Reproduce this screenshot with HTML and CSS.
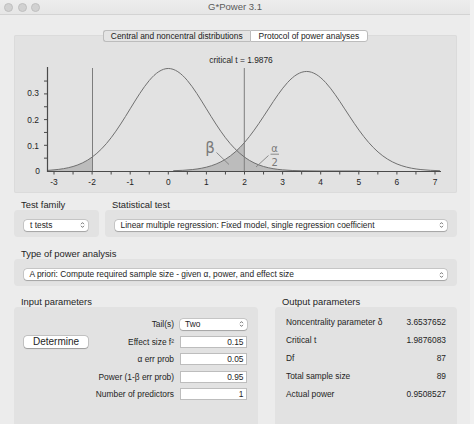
FILE: index.html
```html
<!DOCTYPE html>
<html>
<head>
<meta charset="utf-8">
<title>G*Power 3.1</title>
<link rel="stylesheet" href="styles.css">
</head>
<body>
<div class="window">
  <div class="titlebar">
    <div class="lights"><span class="light"></span><span class="light"></span><span class="light"></span></div>
    <div class="title">G*Power 3.1</div>
    <div></div>
  </div>
  <div class="main">
    <div class="tabs">
      <div class="tab">Central and noncentral distributions</div>
      <div class="tab active">Protocol of power analyses</div>
    </div>
    <div class="graph">
      <svg class="plot" width="443" height="158" viewBox="14 35 443 158" xmlns="http://www.w3.org/2000/svg">
        <!-- shaded areas -->
        <path class="fill" d="M48,171 L48,170.35 L54,169.86 C60.35,169.29 66.70,168.37 73.05,166.50 C79.40,164.63 85.75,161.75 92.1,157.12 L92.5,156.9 L92.5,171 Z"/>
        <path class="fill" d="M244.3,171 L244.3,157.2 L244.5,157.12 C250.85,161.75 257.20,164.63 263.55,166.50 C269.90,168.37 276.25,169.29 282.6,169.86 C288.95,170.43 295.30,170.65 301.65,170.78 C308.00,170.91 314.35,170.95 320.7,170.97 L360,171 Z"/>
        <path class="fill" d="M173.25,171 L173.25,170.69 C179.60,170.52 185.95,170.24 192.30,169.57 C198.65,168.90 205.00,167.82 211.35,165.76 C217.70,163.70 224.05,160.64 230.40,155.89 C234.93,152.50 239.47,148.23 244.3,143.09 L244.3,171 Z"/>
        <!-- critical lines -->
        <path class="crit" d="M92.5,68 L92.5,171 M244.3,68 L244.3,171"/>
        <!-- central curve -->
        <path class="curve" d="M48,170.35 L54,169.86 C60.35,169.29 66.70,168.37 73.05,166.50 C79.40,164.63 85.75,161.75 92.1,157.12 C98.45,152.49 104.80,146.04 111.15,137.72 C117.50,129.40 123.85,119.18 130.2,108.81 C136.55,98.45 142.90,88.05 149.25,80.51 C155.60,72.97 161.95,68.48 168.3,68.48 C174.65,68.48 181.00,72.97 187.35,80.51 C193.70,88.05 200.05,98.45 206.4,108.81 C212.75,119.18 219.10,129.40 225.45,137.72 C231.80,146.04 238.15,152.49 244.5,157.12 C250.85,161.75 257.20,164.63 263.55,166.50 C269.90,168.37 276.25,169.29 282.6,169.86 C288.95,170.43 295.30,170.65 301.65,170.78 C308.00,170.91 314.35,170.95 320.7,170.97 L360,171"/>
        <!-- noncentral curve -->
        <path class="curve" d="M173.25,170.69 C179.60,170.52 185.95,170.24 192.30,169.57 C198.65,168.90 205.00,167.82 211.35,165.76 C217.70,163.70 224.05,160.64 230.40,155.89 C236.75,151.14 243.10,144.64 249.45,136.51 C255.80,128.38 262.15,118.64 268.50,108.88 C274.85,99.12 281.20,89.47 287.55,82.52 C293.90,75.57 300.25,71.46 306.60,71.46 C312.95,71.46 319.30,75.57 325.65,82.52 C332.00,89.47 338.35,99.12 344.70,108.88 C351.05,118.64 357.40,128.38 363.75,136.51 C370.10,144.64 376.45,151.14 382.80,155.89 C389.15,160.64 395.50,163.70 401.85,165.76 C408.20,167.82 414.55,168.90 420.90,169.57 C427.25,170.24 433.60,170.52 439.95,170.69"/>
        <!-- axes -->
        <path class="axis" d="M47.5,67 L47.5,171.5 L441,171.5"/>
        <path class="tick" d="M44,81.05 H47.5 M44,93.9 H47.5 M44,106.75 H47.5 M44,119.6 H47.5 M44,132.45 H47.5 M44,145.3 H47.5 M44,158.15 H47.5
          M54,171.5 V174.5 M73.05,171.5 V174.5 M92.1,171.5 V174.5 M111.15,171.5 V174.5 M130.2,171.5 V174.5 M149.25,171.5 V174.5 M168.3,171.5 V174.5 M187.35,171.5 V174.5 M206.4,171.5 V174.5 M225.45,171.5 V174.5 M244.5,171.5 V174.5 M263.55,171.5 V174.5 M282.6,171.5 V174.5 M301.65,171.5 V174.5 M320.7,171.5 V174.5 M339.75,171.5 V174.5 M358.8,171.5 V174.5 M377.85,171.5 V174.5 M396.9,171.5 V174.5 M415.95,171.5 V174.5 M435,171.5 V174.5"/>
        <g class="lbl">
          <text x="39" y="96" text-anchor="end">0.3</text>
          <text x="39" y="123" text-anchor="end">0.2</text>
          <text x="39" y="149" text-anchor="end">0.1</text>
          <text x="40" y="174" text-anchor="end">0</text>
          <text x="54" y="185" text-anchor="middle">-3</text>
          <text x="92.1" y="185" text-anchor="middle">-2</text>
          <text x="130.2" y="185" text-anchor="middle">-1</text>
          <text x="168.3" y="185" text-anchor="middle">0</text>
          <text x="206.4" y="185" text-anchor="middle">1</text>
          <text x="244.5" y="185" text-anchor="middle">2</text>
          <text x="282.6" y="185" text-anchor="middle">3</text>
          <text x="320.7" y="185" text-anchor="middle">4</text>
          <text x="358.8" y="185" text-anchor="middle">5</text>
          <text x="396.9" y="185" text-anchor="middle">6</text>
          <text x="435" y="185" text-anchor="middle">7</text>
          <text x="241" y="63" text-anchor="middle">critical t = 1.9876</text>
        </g>
        <text class="greek beta" x="210" y="153" text-anchor="middle">β</text>
        <path class="pointer" d="M216.5,152.5 L229,164.5 M256,167 L268.5,155.5"/>
        <text class="greek alpha" x="274.5" y="151.5" text-anchor="middle">α</text>
        <path class="pointer" d="M270.5,154.2 H279"/>
        <text class="greek alpha" x="274.8" y="166" text-anchor="middle">2</text>
      </svg>
    </div>

    <div class="row row-first">
      <div class="group family">
        <div class="group-label">Test family</div>
        <div class="group-box">
          <div class="select"><span>t tests</span><svg class="chev" width="5" height="8" viewBox="0 0 5 8"><path d="M1,3.2 L2.5,1.6 L4,3.2 M1,4.8 L2.5,6.4 L4,4.8"/></svg></div>
        </div>
      </div>
      <div class="group stat">
        <div class="group-label">Statistical test</div>
        <div class="group-box">
          <div class="select"><span>Linear multiple regression: Fixed model, single regression coefficient</span><svg class="chev" width="5" height="8" viewBox="0 0 5 8"><path d="M1,3.2 L2.5,1.6 L4,3.2 M1,4.8 L2.5,6.4 L4,4.8"/></svg></div>
        </div>
      </div>
    </div>

    <div class="row row-second">
      <div class="group wide">
        <div class="group-label">Type of power analysis</div>
        <div class="group-box">
          <div class="select"><span>A priori: Compute required sample size - given α, power, and effect size</span><svg class="chev" width="5" height="8" viewBox="0 0 5 8"><path d="M1,3.2 L2.5,1.6 L4,3.2 M1,4.8 L2.5,6.4 L4,4.8"/></svg></div>
        </div>
      </div>
    </div>

    <div class="row row-third">
      <div class="group input">
        <div class="group-label">Input parameters</div>
        <div class="param-box input-grid">
          <div class="plabel r1">Tail(s)</div>
          <div class="select tail r1"><span>Two</span><svg class="chev" width="5" height="8" viewBox="0 0 5 8"><path d="M1,3.2 L2.5,1.6 L4,3.2 M1,4.8 L2.5,6.4 L4,4.8"/></svg></div>
          <div class="button r2">Determine</div>
          <div class="plabel r2">Effect size f²</div>
          <div class="field r2">0.15</div>
          <div class="plabel r3">α err prob</div>
          <div class="field r3">0.05</div>
          <div class="plabel r4">Power (1-β err prob)</div>
          <div class="field r4">0.95</div>
          <div class="plabel r5">Number of predictors</div>
          <div class="field r5">1</div>
        </div>
      </div>
      <div class="group output">
        <div class="group-label">Output parameters</div>
        <div class="param-box output-list">
          <div class="orow"><span>Noncentrality parameter δ</span><span>3.6537652</span></div>
          <div class="orow"><span>Critical t</span><span>1.9876083</span></div>
          <div class="orow"><span>Df</span><span>87</span></div>
          <div class="orow"><span>Total sample size</span><span>89</span></div>
          <div class="orow"><span>Actual power</span><span>0.9508527</span></div>
        </div>
      </div>
    </div>
  </div>
</div>
</body>
</html>
```

FILE: styles.css
```css
html, body {
  margin: 0;
  padding: 0;
}
body {
  width: 474px;
  height: 424px;
  overflow: hidden;
  background: #f1f1f1;
  font-family: "Liberation Sans", Arial, sans-serif;
  color: #1e1e1e;
}
.window {
  width: 470px;
  height: 424px;
  background: #ececec;
  overflow: hidden;
}
.titlebar {
  height: 14px;
  border-bottom: 1px solid #d3d3d3;
  background: linear-gradient(#ededed, #e6e6e6);
  display: grid;
  grid-template-columns: 1fr auto 1fr;
  align-items: center;
}
.lights {
  display: flex;
  gap: 4.5px;
  padding-left: 4px;
}
.light {
  width: 9px;
  height: 9px;
  box-sizing: border-box;
  border-radius: 50%;
  background: #d1d1d1;
  border: 0.5px solid #bfbfbf;
}
.title {
  font-size: 9.5px;
  color: #5a5a5a;
  line-height: 14px;
}
.main {
  padding: 0 13px 0 14px;
}
.tabs {
  position: relative;
  z-index: 1;
  margin-top: 15px;
  height: 12px;
  display: flex;
  justify-content: center;
}
.tab {
  font-size: 8.4px;
  line-height: 10px;
  height: 12px;
  box-sizing: border-box;
  padding: 0 7px;
  border: 1px solid #bcbcbc;
  background: #e4e4e4;
  color: #1a1a1a;
}
.tab:first-child {
  border-radius: 3px 0 0 3px;
  border-right: none;
}
.tab.active {
  background: #ffffff;
  border-radius: 0 3px 3px 0;
  padding: 0 8px;
}
.graph {
  margin-top: -7px;
  height: 158px;
  background: #e2e2e2;
  box-shadow: inset 0 0 0 1px #dbdbdb;
  border-radius: 2px;
}
.plot {
  display: block;
}
.fill {
  fill: #bcbcbc;
  stroke: none;
}
.crit {
  stroke: #7d7d7d;
  stroke-width: 1;
  fill: none;
}
.curve {
  stroke: #707070;
  stroke-width: 1;
  fill: none;
}
.axis {
  stroke: #4a4a4a;
  stroke-width: 1.2;
  fill: none;
}
.tick {
  stroke: #4a4a4a;
  stroke-width: 1;
  fill: none;
}
.lbl text {
  font-family: "Liberation Sans", Arial, sans-serif;
  font-size: 8.4px;
  fill: #1e1e1e;
}
.greek {
  font-family: "DejaVu Sans", "Liberation Sans", sans-serif;
  fill: #7a7a7a;
}
.beta {
  font-size: 15px;
}
.alpha {
  font-size: 10px;
}
.pointer {
  stroke: #808080;
  stroke-width: 0.9;
  fill: none;
}
.row {
  display: flex;
  gap: 6px;
}
.row-first {
  margin-top: 5.5px;
}
.row-second {
  margin-top: 11.5px;
}
.row-third {
  margin-top: 10px;
  gap: 17px;
}
.group-label {
  font-size: 9.4px;
  line-height: 11px;
  height: 11px;
  padding-left: 7px;
  color: #1e1e1e;
}
.group-box {
  background: #e2e2e2;
  border-radius: 4px;
  padding: 10px 10px 6px 10px;
}
.family {
  width: 85px;
}
.family .group-box {
  padding-right: 11px;
}
.stat, .wide {
  flex: 1;
}
.select {
  display: flex;
  align-items: center;
  justify-content: space-between;
  height: 11px;
  box-sizing: border-box;
  background: #ffffff;
  border-radius: 3px;
  box-shadow: 0 0 0 0.5px rgba(0, 0, 0, 0.22), 0 0.5px 1px rgba(0, 0, 0, 0.18);
  padding: 0 3px 0 6px;
  font-size: 8.4px;
  line-height: 11px;
  white-space: nowrap;
}
.stat .select, .wide .select {
  padding-left: 5.5px;
}
.chev {
  flex: none;
}
.chev path {
  stroke: #555;
  stroke-width: 0.8;
  fill: none;
}
.input {
  width: 244px;
}
.output {
  flex: 1;
}
.param-box {
  background: #e2e2e2;
  border-radius: 4px 4px 0 0;
  height: 117px;
  box-sizing: border-box;
}
.input-grid {
  padding: 11px 11px 0 10px;
  display: grid;
  grid-template-columns: 64px 1fr 67px;
  grid-template-rows: repeat(5, 12px);
  column-gap: 6px;
  row-gap: 5.5px;
  align-items: center;
}
.r1 { grid-row: 1; }
.r2 { grid-row: 2; }
.r3 { grid-row: 3; }
.r4 { grid-row: 4; }
.r5 { grid-row: 5; }
.plabel {
  grid-column: 2;
  text-align: right;
  font-size: 8.4px;
  line-height: 12px;
  white-space: nowrap;
}
.field {
  grid-column: 3;
  height: 12px;
  box-sizing: border-box;
  background: #ffffff;
  border: 1px solid #bdbdbd;
  text-align: right;
  padding-right: 2.5px;
  font-size: 8.4px;
  line-height: 10px;
}
.tail {
  grid-column: 3;
  padding-left: 5px;
}
.button {
  grid-column: 1;
  height: 12px;
  box-sizing: border-box;
  background: #ffffff;
  border-radius: 3px;
  box-shadow: 0 0 0 0.5px rgba(0, 0, 0, 0.25), 0 0.5px 1px rgba(0, 0, 0, 0.2);
  text-align: center;
  font-size: 10px;
  line-height: 12px;
}
.output-list {
  padding: 6px 11px 0 11px;
}
.orow {
  display: flex;
  justify-content: space-between;
  height: 18px;
  line-height: 18px;
  font-size: 8.4px;
}
```
